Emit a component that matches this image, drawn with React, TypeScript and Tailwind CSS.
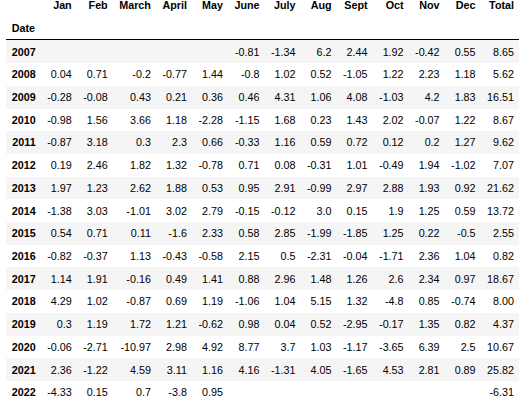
import React from "react";

const cols = ["Jan", "Feb", "March", "April", "May", "June", "July", "Aug", "Sept", "Oct", "Nov", "Dec", "Total"];

const rows: [string, string[]][] = [
  ["2007", ["", "", "", "", "", "-0.81", "-1.34", "6.2", "2.44", "1.92", "-0.42", "0.55", "8.65"]],
  ["2008", ["0.04", "0.71", "-0.2", "-0.77", "1.44", "-0.8", "1.02", "0.52", "-1.05", "1.22", "2.23", "1.18", "5.62"]],
  ["2009", ["-0.28", "-0.08", "0.43", "0.21", "0.36", "0.46", "4.31", "1.06", "4.08", "-1.03", "4.2", "1.83", "16.51"]],
  ["2010", ["-0.98", "1.56", "3.66", "1.18", "-2.28", "-1.15", "1.68", "0.23", "1.43", "2.02", "-0.07", "1.22", "8.67"]],
  ["2011", ["-0.87", "3.18", "0.3", "2.3", "0.66", "-0.33", "1.16", "0.59", "0.72", "0.12", "0.2", "1.27", "9.62"]],
  ["2012", ["0.19", "2.46", "1.82", "1.32", "-0.78", "0.71", "0.08", "-0.31", "1.01", "-0.49", "1.94", "-1.02", "7.07"]],
  ["2013", ["1.97", "1.23", "2.62", "1.88", "0.53", "0.95", "2.91", "-0.99", "2.97", "2.88", "1.93", "0.92", "21.62"]],
  ["2014", ["-1.38", "3.03", "-1.01", "3.02", "2.79", "-0.15", "-0.12", "3.0", "0.15", "1.9", "1.25", "0.59", "13.72"]],
  ["2015", ["0.54", "0.71", "0.11", "-1.6", "2.33", "0.58", "2.85", "-1.99", "-1.85", "1.25", "0.22", "-0.5", "2.55"]],
  ["2016", ["-0.82", "-0.37", "1.13", "-0.43", "-0.58", "2.15", "0.5", "-2.31", "-0.04", "-1.71", "2.36", "1.04", "0.82"]],
  ["2017", ["1.14", "1.91", "-0.16", "0.49", "1.41", "0.88", "2.96", "1.48", "1.26", "2.6", "2.34", "0.97", "18.67"]],
  ["2018", ["4.29", "1.02", "-0.87", "0.69", "1.19", "-1.06", "1.04", "5.15", "1.32", "-4.8", "0.85", "-0.74", "8.00"]],
  ["2019", ["0.3", "1.19", "1.72", "1.21", "-0.62", "0.98", "0.04", "0.52", "-2.95", "-0.17", "1.35", "0.82", "4.37"]],
  ["2020", ["-0.06", "-2.71", "-10.97", "2.98", "4.92", "8.77", "3.7", "1.03", "-1.17", "-3.65", "6.39", "2.5", "10.67"]],
  ["2021", ["2.36", "-1.22", "4.59", "3.11", "1.16", "4.16", "-1.31", "4.05", "-1.65", "4.53", "2.81", "0.89", "25.82"]],
  ["2022", ["-4.33", "0.15", "0.7", "-3.8", "0.95", "", "", "", "", "", "", "", "-6.31"]],
];

export default function App() {
  return (
    <div className="bg-white w-[519px] h-[406px] overflow-hidden pl-[6px]">
      <table
        className="-mt-[6px] border-collapse text-[10.75px] leading-[12.2px] text-black"
        style={{ fontFamily: '"Liberation Sans", Arial, sans-serif' }}
      >
        <thead className="border-b border-black">
          <tr>
            <th className="px-[5.75px] py-[5.25px] text-right font-bold"></th>
            {cols.map((c) => (
              <th key={c} className="px-[5.75px] py-[5.25px] text-right font-bold">
                {c}
              </th>
            ))}
          </tr>
          <tr>
            <th className="px-[5.75px] py-[5.25px] text-left font-bold">Date</th>
            {cols.map((c) => (
              <th key={c} className="px-[5.75px] py-[5.25px]"></th>
            ))}
          </tr>
        </thead>
        <tbody>
          {rows.map(([y, vals], i) => (
            <tr key={y} className={i % 2 === 0 ? "bg-[#f5f5f5]" : "bg-white"}>
              <th className="px-[5.75px] py-[5.25px] text-right font-bold">{y}</th>
              {vals.map((v, j) => (
                <td key={j} className="px-[5.75px] py-[5.25px] text-right">
                  {v}
                </td>
              ))}
            </tr>
          ))}
        </tbody>
      </table>
    </div>
  );
}
